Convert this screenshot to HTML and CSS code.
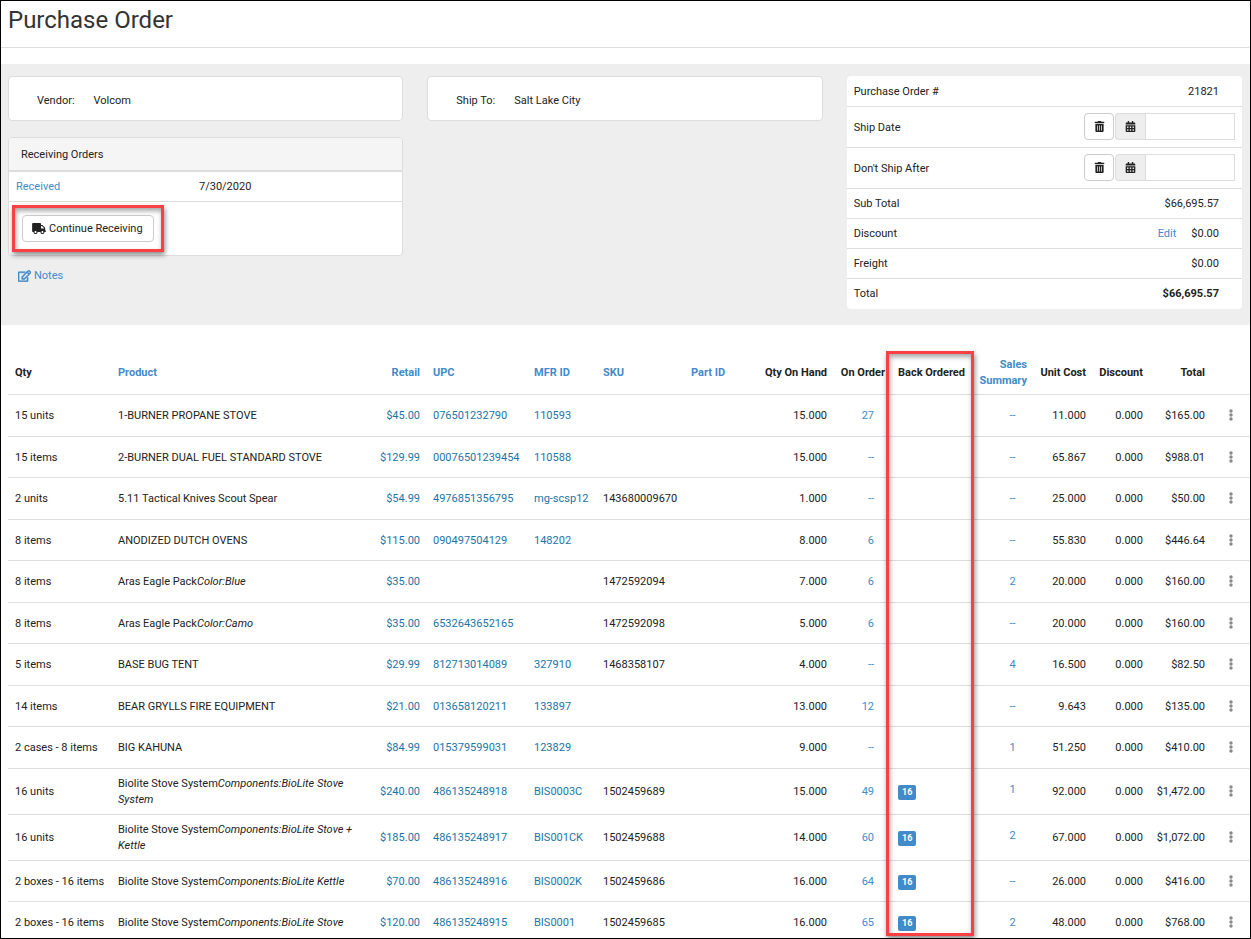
FILE: index.html
```html
<!DOCTYPE html>
<html lang="en">
<head>
    <meta charset="UTF-8">
    <meta name="viewport" content="width=device-width, initial-scale=1.0">
    <title>Purchase Order</title>
    <link rel="stylesheet" href="styles.css">
</head>
<body>
    <svg class="icon-defs" aria-hidden="true">
        <symbol id="icon-trash" viewBox="0 0 448 512"><path d="M32 464a48 48 0 0 0 48 48h288a48 48 0 0 0 48-48V128H32zm272-256a16 16 0 0 1 32 0v224a16 16 0 0 1-32 0zm-96 0a16 16 0 0 1 32 0v224a16 16 0 0 1-32 0zm-96 0a16 16 0 0 1 32 0v224a16 16 0 0 1-32 0zM432 32H312l-9.4-18.7A24 24 0 0 0 281.1 0H166.8a23.72 23.72 0 0 0-21.4 13.3L136 32H16A16 16 0 0 0 0 48v32a16 16 0 0 0 16 16h416a16 16 0 0 0 16-16V48a16 16 0 0 0-16-16z"/></symbol>
        <symbol id="icon-calendar" viewBox="0 0 448 512"><path fill-rule="evenodd" d="M0 464c0 26.500 21.500 48 48 48h352c26.500 0 48-21.500 48-48V192H0zM64 256h64v64H64zm128 0h64v64h-64zm128 0h64v64h-64zM64 384h64v64H64zm128 0h64v64h-64zm128 0h64v64h-64zM448 112v48H0v-48c0-26.500 21.500-48 48-48h48V12c0-6.600 5.400-12 12-12h40c6.600 0 12 5.400 12 12v52h128V12c0-6.600 5.400-12 12-12h40c6.600 0 12 5.400 12 12v52h48c26.500 0 48 21.500 48 48z"/></symbol>
        <symbol id="icon-dots" viewBox="0 0 4 12"><circle cx="2" cy="2" r="1.700"/><circle cx="2" cy="6" r="1.700"/><circle cx="2" cy="10" r="1.700"/></symbol>
    </svg>

    <div class="page">
        <header class="page-header">
            <h1>Purchase Order</h1>
        </header>

        <section class="order-info">
            <div class="info-col">
                <div class="panel party">
                    <span>Vendor:</span>
                    <span>Volcom</span>
                </div>
                <div class="panel receiving">
                    <h2 class="panel-heading">Receiving Orders</h2>
                    <div class="receiving-row">
                        <a href="#">Received</a>
                        <span>7/30/2020</span>
                    </div>
                    <div class="panel-footer">
                        <div class="btn-wrap">
                            <button type="button" class="btn">
                                <svg class="icon icon-truck" viewBox="0 0 640 512"><path d="M624 352h-16V243.900c0-12.700-5.100-24.900-14.100-33.900L494 110.100c-9-9-21.200-14.100-33.900-14.100H416V48c0-26.500-21.500-48-48-48H48C21.500 0 0 21.500 0 48v320c0 26.500 21.500 48 48 48h16c0 53 43 96 96 96s96-43 96-96h128c0 53 43 96 96 96s96-43 96-96h48c8.800 0 16-7.200 16-16v-32c0-8.800-7.200-16-16-16zM160 464c-26.500 0-48-21.500-48-48s21.500-48 48-48 48 21.500 48 48-21.500 48-48 48zm320 0c-26.500 0-48-21.500-48-48s21.500-48 48-48 48 21.500 48 48-21.500 48-48 48zm80-208H416V144h44.100l99.900 99.900V256z"/></svg>
                                Continue Receiving
                            </button>
                            <div class="callout callout-btn"></div>
                        </div>
                    </div>
                </div>
                <a href="#" class="notes">
                    <svg class="icon icon-edit" viewBox="0 0 576 512"><path d="M402.300 344.900l32-32c5-5 13.700-1.500 13.700 5.700V464c0 26.500-21.500 48-48 48H48c-26.500 0-48-21.500-48-48V112c0-26.500 21.500-48 48-48h273.500c7.100 0 10.700 8.600 5.700 13.700l-32 32c-1.500 1.500-3.500 2.300-5.700 2.300H48v352h352V350.500c0-2.100.8-4.100 2.300-5.600zm156.600-201.800L296.300 405.700l-90.400 10c-26.200 2.900-48.500-19.200-45.600-45.600l10-90.400L432.900 17.100c22.900-22.900 59.900-22.900 82.700 0l43.200 43.200c22.900 22.900 22.900 60 .1 82.800zM460.100 174L402 115.900 216.200 301.800l-7.300 65.300 65.300-7.300L460.100 174zm64.800-79.700l-43.200-43.200c-4.100-4.100-10.800-4.100-14.800 0L436 82l58.100 58.100 30.900-30.900c4-4.200 4-10.800-.1-14.900z"/></svg>
                    Notes
                </a>
            </div>

            <div class="info-col">
                <div class="panel party">
                    <span>Ship To:</span>
                    <span>Salt Lake City</span>
                </div>
            </div>

            <div class="info-col">
                <div class="summary">
                    <div class="summary-row">
                        <span>Purchase Order #</span>
                        <span>21821</span>
                    </div>
                    <div class="summary-row date-row">
                        <label for="shipDate">Ship Date</label>
                        <div class="date-group">
                            <button type="button" class="btn btn-icon" aria-label="Clear ship date"><svg class="icon"><use href="#icon-trash"/></svg></button>
                            <span class="addon"><svg class="icon"><use href="#icon-calendar"/></svg></span>
                            <input type="text" id="shipDate" name="shipDate">
                        </div>
                    </div>
                    <div class="summary-row date-row">
                        <label for="shipAfter">Don't Ship After</label>
                        <div class="date-group">
                            <button type="button" class="btn btn-icon" aria-label="Clear don't ship after"><svg class="icon"><use href="#icon-trash"/></svg></button>
                            <span class="addon"><svg class="icon"><use href="#icon-calendar"/></svg></span>
                            <input type="text" id="shipAfter" name="shipAfter">
                        </div>
                    </div>
                    <div class="summary-row">
                        <span>Sub Total</span>
                        <span>$66,695.57</span>
                    </div>
                    <div class="summary-row">
                        <span>Discount</span>
                        <span><a href="#" class="edit">Edit</a>$0.00</span>
                    </div>
                    <div class="summary-row">
                        <span>Freight</span>
                        <span>$0.00</span>
                    </div>
                    <div class="summary-row">
                        <span>Total</span>
                        <strong>$66,695.57</strong>
                    </div>
                </div>
            </div>
        </section>

        <section class="items">
            <table class="items-table">
                <colgroup>
                    <col class="c-qty"><col><col class="c-retail"><col class="c-upc"><col class="c-mfr"><col class="c-sku"><col class="c-part"><col class="c-hand"><col class="c-order"><col class="c-back"><col class="c-sales"><col class="c-cost"><col class="c-disc"><col class="c-total"><col class="c-menu">
                </colgroup>
                <thead>
                    <tr>
                        <th>Qty</th>
                        <th><a href="#">Product</a></th>
                        <th class="num"><a href="#">Retail</a></th>
                        <th><a href="#">UPC</a></th>
                        <th><a href="#">MFR ID</a></th>
                        <th><a href="#">SKU</a></th>
                        <th><a href="#">Part ID</a></th>
                        <th class="num">Qty On Hand</th>
                        <th class="num">On Order</th>
                        <th>Back Ordered</th>
                        <th class="num wrap"><a href="#">Sales Summary</a></th>
                        <th class="num">Unit Cost</th>
                        <th class="num">Discount</th>
                        <th class="num">Total</th>
                        <th></th>
                    </tr>
                </thead>
                <tbody>
                    <tr>
                        <td>15 units</td><td class="name">1-BURNER PROPANE STOVE</td>
                        <td class="num"><a href="#" class="field">$45.00</a></td><td><a href="#" class="field">076501232790</a></td><td><a href="#" class="field">110593</a></td><td></td><td></td>
                        <td class="num">15.000</td><td class="num order"><a href="#">27</a></td><td></td><td class="sales"><a href="#">--</a></td>
                        <td class="num">11.000</td><td class="num">0.000</td><td class="num">$165.00</td>
                        <td><button type="button" class="menu" aria-label="Row menu"><svg><use href="#icon-dots"/></svg></button></td>
                    </tr>
                    <tr>
                        <td>15 items</td><td class="name">2-BURNER DUAL FUEL STANDARD STOVE</td>
                        <td class="num"><a href="#" class="field">$129.99</a></td><td><a href="#" class="field">00076501239454</a></td><td><a href="#" class="field">110588</a></td><td></td><td></td>
                        <td class="num">15.000</td><td class="num order"><a href="#">--</a></td><td></td><td class="sales"><a href="#">--</a></td>
                        <td class="num">65.867</td><td class="num">0.000</td><td class="num">$988.01</td>
                        <td><button type="button" class="menu" aria-label="Row menu"><svg><use href="#icon-dots"/></svg></button></td>
                    </tr>
                    <tr>
                        <td>2 units</td><td class="name">5.11 Tactical Knives Scout Spear</td>
                        <td class="num"><a href="#" class="field">$54.99</a></td><td><a href="#" class="field">4976851356795</a></td><td><a href="#" class="field">mg-scsp12</a></td><td>143680009670</td><td></td>
                        <td class="num">1.000</td><td class="num order"><a href="#">--</a></td><td></td><td class="sales"><a href="#">--</a></td>
                        <td class="num">25.000</td><td class="num">0.000</td><td class="num">$50.00</td>
                        <td><button type="button" class="menu" aria-label="Row menu"><svg><use href="#icon-dots"/></svg></button></td>
                    </tr>
                    <tr>
                        <td>8 items</td><td class="name">ANODIZED DUTCH OVENS</td>
                        <td class="num"><a href="#" class="field">$115.00</a></td><td><a href="#" class="field">090497504129</a></td><td><a href="#" class="field">148202</a></td><td></td><td></td>
                        <td class="num">8.000</td><td class="num order"><a href="#">6</a></td><td></td><td class="sales"><a href="#">--</a></td>
                        <td class="num">55.830</td><td class="num">0.000</td><td class="num">$446.64</td>
                        <td><button type="button" class="menu" aria-label="Row menu"><svg><use href="#icon-dots"/></svg></button></td>
                    </tr>
                    <tr>
                        <td>8 items</td><td class="name">Aras Eagle Pack<em>Color:Blue</em></td>
                        <td class="num"><a href="#" class="field">$35.00</a></td><td></td><td></td><td>1472592094</td><td></td>
                        <td class="num">7.000</td><td class="num order"><a href="#">6</a></td><td></td><td class="sales"><a href="#">2</a></td>
                        <td class="num">20.000</td><td class="num">0.000</td><td class="num">$160.00</td>
                        <td><button type="button" class="menu" aria-label="Row menu"><svg><use href="#icon-dots"/></svg></button></td>
                    </tr>
                    <tr>
                        <td>8 items</td><td class="name">Aras Eagle Pack<em>Color:Camo</em></td>
                        <td class="num"><a href="#" class="field">$35.00</a></td><td><a href="#" class="field">6532643652165</a></td><td></td><td>1472592098</td><td></td>
                        <td class="num">5.000</td><td class="num order"><a href="#">6</a></td><td></td><td class="sales"><a href="#">--</a></td>
                        <td class="num">20.000</td><td class="num">0.000</td><td class="num">$160.00</td>
                        <td><button type="button" class="menu" aria-label="Row menu"><svg><use href="#icon-dots"/></svg></button></td>
                    </tr>
                    <tr>
                        <td>5 items</td><td class="name">BASE BUG TENT</td>
                        <td class="num"><a href="#" class="field">$29.99</a></td><td><a href="#" class="field">812713014089</a></td><td><a href="#" class="field">327910</a></td><td>1468358107</td><td></td>
                        <td class="num">4.000</td><td class="num order"><a href="#">--</a></td><td></td><td class="sales"><a href="#">4</a></td>
                        <td class="num">16.500</td><td class="num">0.000</td><td class="num">$82.50</td>
                        <td><button type="button" class="menu" aria-label="Row menu"><svg><use href="#icon-dots"/></svg></button></td>
                    </tr>
                    <tr>
                        <td>14 items</td><td class="name">BEAR GRYLLS FIRE EQUIPMENT</td>
                        <td class="num"><a href="#" class="field">$21.00</a></td><td><a href="#" class="field">013658120211</a></td><td><a href="#" class="field">133897</a></td><td></td><td></td>
                        <td class="num">13.000</td><td class="num order"><a href="#">12</a></td><td></td><td class="sales"><a href="#">--</a></td>
                        <td class="num">9.643</td><td class="num">0.000</td><td class="num">$135.00</td>
                        <td><button type="button" class="menu" aria-label="Row menu"><svg><use href="#icon-dots"/></svg></button></td>
                    </tr>
                    <tr>
                        <td>2 cases - 8 items</td><td class="name">BIG KAHUNA</td>
                        <td class="num"><a href="#" class="field">$84.99</a></td><td><a href="#" class="field">015379599031</a></td><td><a href="#" class="field">123829</a></td><td></td><td></td>
                        <td class="num">9.000</td><td class="num order"><a href="#">--</a></td><td></td><td class="sales"><a href="#">1</a></td>
                        <td class="num">51.250</td><td class="num">0.000</td><td class="num">$410.00</td>
                        <td><button type="button" class="menu" aria-label="Row menu"><svg><use href="#icon-dots"/></svg></button></td>
                    </tr>
                    <tr>
                        <td>16 units</td><td class="name">Biolite Stove System<em>Components:BioLite Stove System</em></td>
                        <td class="num"><a href="#" class="field">$240.00</a></td><td><a href="#" class="field">486135248918</a></td><td><a href="#" class="field">BIS0003C</a></td><td>1502459689</td><td></td>
                        <td class="num">15.000</td><td class="num order"><a href="#">49</a></td><td><span class="badge">16</span></td><td class="sales"><a href="#">1</a></td>
                        <td class="num">92.000</td><td class="num">0.000</td><td class="num">$1,472.00</td>
                        <td><button type="button" class="menu" aria-label="Row menu"><svg><use href="#icon-dots"/></svg></button></td>
                    </tr>
                    <tr>
                        <td>16 units</td><td class="name">Biolite Stove System<em>Components:BioLite Stove + Kettle</em></td>
                        <td class="num"><a href="#" class="field">$185.00</a></td><td><a href="#" class="field">486135248917</a></td><td><a href="#" class="field">BIS001CK</a></td><td>1502459688</td><td></td>
                        <td class="num">14.000</td><td class="num order"><a href="#">60</a></td><td><span class="badge">16</span></td><td class="sales"><a href="#">2</a></td>
                        <td class="num">67.000</td><td class="num">0.000</td><td class="num">$1,072.00</td>
                        <td><button type="button" class="menu" aria-label="Row menu"><svg><use href="#icon-dots"/></svg></button></td>
                    </tr>
                    <tr>
                        <td>2 boxes - 16 items</td><td class="name">Biolite Stove System<em>Components:BioLite Kettle</em></td>
                        <td class="num"><a href="#" class="field">$70.00</a></td><td><a href="#" class="field">486135248916</a></td><td><a href="#" class="field">BIS0002K</a></td><td>1502459686</td><td></td>
                        <td class="num">16.000</td><td class="num order"><a href="#">64</a></td><td><span class="badge">16</span></td><td class="sales"><a href="#">--</a></td>
                        <td class="num">26.000</td><td class="num">0.000</td><td class="num">$416.00</td>
                        <td><button type="button" class="menu" aria-label="Row menu"><svg><use href="#icon-dots"/></svg></button></td>
                    </tr>
                    <tr>
                        <td>2 boxes - 16 items</td><td class="name">Biolite Stove System<em>Components:BioLite Stove</em></td>
                        <td class="num"><a href="#" class="field">$120.00</a></td><td><a href="#" class="field">486135248915</a></td><td><a href="#" class="field">BIS0001</a></td><td>1502459685</td><td></td>
                        <td class="num">16.000</td><td class="num order"><a href="#">65</a></td><td><span class="badge">16</span></td><td class="sales"><a href="#">2</a></td>
                        <td class="num">48.000</td><td class="num">0.000</td><td class="num">$768.00</td>
                        <td><button type="button" class="menu" aria-label="Row menu"><svg><use href="#icon-dots"/></svg></button></td>
                    </tr>
                </tbody>
            </table>
            <div class="callout callout-column"></div>
        </section>
    </div>
</body>
</html>
```
FILE: styles.css
```css
* {
    box-sizing: border-box;
}
body {
    margin: 0;
    font-family: Roboto, "Liberation Sans", sans-serif;
    font-size: 11px;
    line-height: 16px;
    color: #222;
    background: #fff;
}
a {
    color: #428bca;
    text-decoration: none;
}
a:hover {
    text-decoration: underline;
}
.icon-defs {
    display: none;
}
.icon {
    width: 11px;
    height: 11px;
    fill: currentColor;
}
.page {
    height: 100vh;
    overflow: hidden;
    border: 1px solid #000;
}
.page-header {
    padding: 4px 7px 12px;
    border-bottom: 1px solid #ddd;
    margin-bottom: 16px;
}
.page-header h1 {
    margin: 0;
    font-size: 24px;
    line-height: 30px;
    font-weight: 400;
    color: #333;
}

/* top block */
.order-info {
    display: grid;
    grid-template-columns: repeat(3, 1fr);
    gap: 24px;
    padding: 12px 8px 16px 7px;
    background: #eee;
}
.panel {
    background: #fff;
    border: 1px solid #ddd;
    border-radius: 4px;
    margin-bottom: 16px;
}
.party {
    display: flex;
    gap: 19px;
    padding: 16px 28px 11px;
}
.panel-heading {
    margin: 0;
    padding: 9px 12px 7px;
    font-size: 11px;
    font-weight: 400;
    background: #f5f5f5;
    border-bottom: 2px solid #ddd;
    border-radius: 3px 3px 0 0;
}
.receiving {
    margin-bottom: 12px;
}
.receiving-row {
    display: grid;
    grid-template-columns: 183px 1fr;
    padding: 7px 7px 6px;
    border-bottom: 1px solid #ddd;
}
.panel-footer {
    padding: 13px;
}
.btn-wrap {
    position: relative;
    display: inline-block;
    vertical-align: top;
}
.btn {
    display: flex;
    align-items: center;
    gap: 3px;
    height: 27px;
    padding: 0 10px 0 9px;
    font: inherit;
    color: #222;
    background: #fff;
    border: 1px solid #ccc;
    border-radius: 4px;
    cursor: pointer;
}
.icon-truck {
    width: 14px;
}
.notes {
    display: inline-flex;
    align-items: center;
    gap: 3px;
    padding: 0 10px;
}
.icon-edit {
    width: 13px;
    height: 12px;
    stroke: currentColor;
    stroke-width: 24px;
}
.summary {
    background: #fff;
    border-radius: 4px;
    padding-bottom: 1px;
}
.summary-row {
    display: flex;
    justify-content: space-between;
    align-items: center;
    height: 30px;
    padding: 1px 23px 0 7px;
}
.summary-row + .summary-row {
    border-top: 1px solid #ddd;
}
.summary-row.date-row {
    height: 41px;
    padding-right: 7px;
}
.date-group {
    display: flex;
    gap: 1px;
    margin-bottom: 2px;
}
.btn-icon {
    width: 30px;
    padding: 0;
    justify-content: center;
}
.addon {
    display: flex;
    align-items: center;
    justify-content: center;
    width: 30px;
    margin-right: -1px;
    background: #eee;
    border: 1px solid #ddd;
    border-right: 0;
    border-radius: 4px 0 0 4px;
}
.date-group input {
    width: 90px;
    height: 27px;
    padding: 4px 6px;
    font: inherit;
    border: 1px solid #ddd;
    background: #fff;
}
.edit {
    margin-right: 15px;
}

/* line items */
.items {
    position: relative;
    margin: 25px 0 0 7px;
}
.items-table {
    width: 100%;
    table-layout: fixed;
    border-collapse: separate;
    border-spacing: 0;
}
.items-table th,
.items-table td {
    padding: 7px 6px 6px 7px;
    text-align: left;
    vertical-align: middle;
    white-space: nowrap;
}
.items-table th {
    height: 44px;
    padding-bottom: 5px;
}
.items-table td {
    height: 42px;
    border-top: 1px solid #ddd;
}
.items-table tr:nth-child(even) td {
    height: 41px;
}
.items-table .name,
.items-table .wrap {
    white-space: normal;
}
.items-table .num {
    text-align: right;
}
.items-table .order {
    padding-right: 17px;
}
.items-table .sales {
    padding: 13px 0 0 20px;
    text-align: center;
    vertical-align: top;
}
.c-qty { width: 103px; }
.c-retail { width: 53px; }
.c-upc { width: 101px; }
.c-mfr { width: 69px; }
.c-sku { width: 88px; }
.c-part { width: 73px; }
.c-hand { width: 76px; }
.c-order { width: 58px; }
.c-back { width: 81px; }
.c-sales { width: 61px; }
.c-cost { width: 59px; }
.c-disc { width: 57px; }
.c-total { width: 62px; }
.c-menu { width: 39px; }
.field {
    color: #1b75a8;
}
.badge {
    display: inline-block;
    padding: 3px 4px;
    font-size: 9px;
    line-height: 9px;
    font-weight: 700;
    color: #fff;
    background: #428bca;
    border-radius: 2px;
}
.menu {
    display: block;
    margin: 0 auto 2px;
    padding: 0;
    width: 12px;
    height: 12px;
    border: 0;
    background: none;
    cursor: pointer;
}
.menu svg {
    display: block;
    width: 12px;
    height: 12px;
    fill: #888;
}

/* highlight frames */
.callout {
    position: absolute;
    border: 3px solid #f94144;
    box-shadow: 1px 3px 5px rgba(0, 0, 0, 0.45), inset 1px 3px 5px rgba(0, 0, 0, 0.35);
    pointer-events: none;
}
.callout-btn {
    inset: -10px;
}
.callout-column {
    top: 1px;
    bottom: 7px;
    right: 276px;
    width: 88px;
}
```
